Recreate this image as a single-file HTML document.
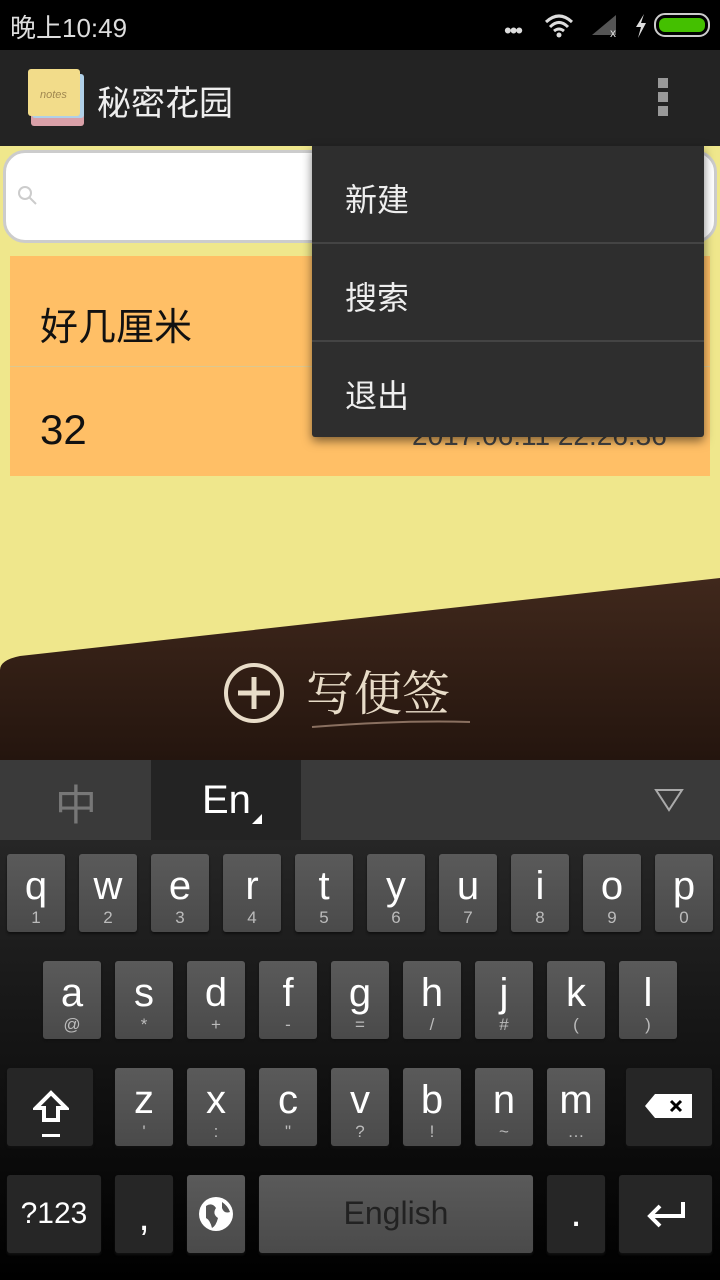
<!DOCTYPE html>
<html><head><meta charset="utf-8"><style>
*{margin:0;padding:0;box-sizing:border-box}
body{width:720px;height:1280px;overflow:hidden;position:relative;background:#EFE78C;font-family:"Liberation Sans","Noto Sans CJK SC",sans-serif}
.abs{position:absolute}
.key{position:absolute;width:58px;height:78px;background:linear-gradient(#5a5a5a,#4a4a4a);border-radius:3px;color:#fff;text-align:center;box-shadow:0 2px 2px #111}
.key .l{font-size:40px;line-height:1;position:absolute;top:12px;left:0;right:0}
.key .s{font-size:17px;color:#bbb;position:absolute;top:54px;left:0;right:0}
.dk{background:#262626}
</style></head><body>
<div class="abs" style="left:0;top:0;width:720px;height:50px;background:#000"></div>
<div class="abs" style="left:10px;top:8px;color:#ddd;font-size:26px">晚上10:49</div>
<div class="abs" style="left:504px;top:18px;color:#ddd;font-size:22px;letter-spacing:-2px">•••</div>
<svg class="abs" style="left:540px;top:10px" width="172" height="30"><path d="M6 12 Q19 0 32 12" stroke="#ddd" stroke-width="3" fill="none"/><path d="M10 17 Q19 8 28 17" stroke="#ddd" stroke-width="3" fill="none"/><path d="M14 21 Q19 17 24 21" stroke="#ddd" stroke-width="3" fill="none"/><circle cx="19" cy="25" r="2.5" fill="#ddd"/><path d="M52 25 L76 5 L76 25Z" fill="#555"/><text x="70" y="27" fill="#ddd" font-size="12">x</text><path d="M104 4 L96 17 L101 17 L98 28 L106 13 L101 13Z" fill="#ddd"/><rect x="115" y="4" width="54" height="22" rx="10" fill="none" stroke="#ccc" stroke-width="2"/><rect x="119" y="8" width="46" height="14" rx="6" fill="#44c000"/></svg>
<div class="abs" style="left:0;top:50px;width:720px;height:96px;background:#232323"></div>
<div class="abs" style="left:31px;top:98px;width:53px;height:28px;background:#d9a0a8;border-radius:3px"></div>
<div class="abs" style="left:32px;top:74px;width:52px;height:44px;background:#b0d0e8;border-radius:3px"></div>
<div class="abs" style="left:28px;top:69px;width:52px;height:47px;background:#f2dc8a;border-radius:3px;color:#a08850;font-size:11px;font-style:italic;padding:20px 0 0 12px">notes</div>
<div class="abs" style="left:97px;top:76px;color:#eee;font-size:34px">秘密花园</div>
<div class="abs" style="left:658px;top:78px;width:10px;height:10px;background:#999;box-shadow:0 14px #999,0 28px #999"></div>
<div class="abs" style="left:3px;top:150px;width:714px;height:93px;background:#fff;border-radius:22px;border:3px solid #ccc"></div>
<svg class="abs" style="left:16px;top:184px" width="24" height="24"><circle cx="9" cy="9" r="6" fill="none" stroke="#ccc" stroke-width="2"/><path d="M13 13 L20 20" stroke="#ccc" stroke-width="2"/></svg>
<div class="abs" style="left:10px;top:256px;width:700px;height:220px;background:#FFBF66"></div>
<div class="abs" style="left:10px;top:366px;width:700px;height:1px;background:#dcc890"></div>
<div class="abs" style="left:40px;top:296px;font-size:38px;color:#111">好几厘米</div>
<div class="abs" style="left:40px;top:406px;font-size:42px;color:#111">32</div>
<div class="abs" style="left:412px;top:420px;font-size:28px;color:#444">2017.06.11 22:26:36</div>
<div class="abs" style="left:312px;top:146px;width:392px;height:291px;background:#2e2e2e;box-shadow:0 4px 10px rgba(0,0,0,.5);border-radius:0 0 3px 3px"></div>
<div class="abs" style="left:312px;top:242px;width:392px;height:2px;background:#444"></div>
<div class="abs" style="left:312px;top:340px;width:392px;height:2px;background:#444"></div>
<div class="abs" style="left:345px;top:175px;color:#eee;font-size:32px">新建</div>
<div class="abs" style="left:345px;top:273px;color:#eee;font-size:32px">搜索</div>
<div class="abs" style="left:345px;top:371px;color:#eee;font-size:32px">退出</div>
<svg class="abs" style="left:0;top:570px" width="720" height="190"><defs><linearGradient id="lg" x1="0" y1="0" x2="0" y2="1"><stop offset="0" stop-color="#40281c"/><stop offset="1" stop-color="#24150e"/></linearGradient></defs><path d="M0 100 Q0 90 20 86 L720 8 L720 190 L0 190Z" fill="url(#lg)"/><circle cx="254" cy="123" r="28" fill="none" stroke="#e8dcc8" stroke-width="4"/><path d="M254 107V139M238 123H270" stroke="#e8dcc8" stroke-width="5"/><text x="306" y="140" fill="#e8dcc8" font-size="48" font-family="Noto Serif CJK SC,serif">写便签</text><path d="M312 157 Q400 150 470 152" stroke="#8a7060" stroke-width="2" fill="none"/></svg>
<div class="abs" style="left:0;top:760px;width:720px;height:80px;background:#3a3a3a"></div>
<div class="abs" style="left:151px;top:760px;width:150px;height:80px;background:#232323"></div>
<div class="abs" style="left:55px;top:772px;color:#777;font-size:42px">中</div>
<div class="abs" style="left:202px;top:778px;color:#fff;font-size:40px">En</div>
<div class="abs" style="left:252px;top:814px;width:0;height:0;border-left:10px solid transparent;border-bottom:10px solid #fff"></div>
<svg class="abs" style="left:654px;top:788px" width="30" height="24"><path d="M2 2H28L15 22Z" fill="none" stroke="#aaa" stroke-width="2"/></svg>
<div class="abs" style="left:0;top:840px;width:720px;height:440px;background:linear-gradient(#262626,#000)"></div>
<div class="key" style="left:7px;top:854px"><div class="l">q</div><div class="s">1</div></div>
<div class="key" style="left:79px;top:854px"><div class="l">w</div><div class="s">2</div></div>
<div class="key" style="left:151px;top:854px"><div class="l">e</div><div class="s">3</div></div>
<div class="key" style="left:223px;top:854px"><div class="l">r</div><div class="s">4</div></div>
<div class="key" style="left:295px;top:854px"><div class="l">t</div><div class="s">5</div></div>
<div class="key" style="left:367px;top:854px"><div class="l">y</div><div class="s">6</div></div>
<div class="key" style="left:439px;top:854px"><div class="l">u</div><div class="s">7</div></div>
<div class="key" style="left:511px;top:854px"><div class="l">i</div><div class="s">8</div></div>
<div class="key" style="left:583px;top:854px"><div class="l">o</div><div class="s">9</div></div>
<div class="key" style="left:655px;top:854px"><div class="l">p</div><div class="s">0</div></div>
<div class="key" style="left:43px;top:961px"><div class="l">a</div><div class="s">@</div></div>
<div class="key" style="left:115px;top:961px"><div class="l">s</div><div class="s">*</div></div>
<div class="key" style="left:187px;top:961px"><div class="l">d</div><div class="s">+</div></div>
<div class="key" style="left:259px;top:961px"><div class="l">f</div><div class="s">-</div></div>
<div class="key" style="left:331px;top:961px"><div class="l">g</div><div class="s">=</div></div>
<div class="key" style="left:403px;top:961px"><div class="l">h</div><div class="s">/</div></div>
<div class="key" style="left:475px;top:961px"><div class="l">j</div><div class="s">#</div></div>
<div class="key" style="left:547px;top:961px"><div class="l">k</div><div class="s">(</div></div>
<div class="key" style="left:619px;top:961px"><div class="l">l</div><div class="s">)</div></div>
<div class="key dk" style="left:7px;top:1068px;width:86px"><svg style="position:absolute;left:26px;top:22px" width="36" height="50"><path d="M18 3 L33 18 H25 V30 H11 V18 H3Z" fill="none" stroke="#fff" stroke-width="4"/><rect x="9" y="44" width="18" height="3" fill="#fff"/></svg></div>
<div class="key" style="left:115px;top:1068px"><div class="l">z</div><div class="s">'</div></div>
<div class="key" style="left:187px;top:1068px"><div class="l">x</div><div class="s">:</div></div>
<div class="key" style="left:259px;top:1068px"><div class="l">c</div><div class="s">"</div></div>
<div class="key" style="left:331px;top:1068px"><div class="l">v</div><div class="s">?</div></div>
<div class="key" style="left:403px;top:1068px"><div class="l">b</div><div class="s">!</div></div>
<div class="key" style="left:475px;top:1068px"><div class="l">n</div><div class="s">~</div></div>
<div class="key" style="left:547px;top:1068px"><div class="l">m</div><div class="s">…</div></div>
<div class="key dk" style="left:626px;top:1068px;width:86px"><svg style="position:absolute;left:19px;top:25px" width="48" height="26"><path d="M0 13 L10 1 H47 V25 H10Z" fill="#fff"/><path d="M26 8 L36 18 M36 8 L26 18" stroke="#000" stroke-width="3"/></svg></div>
<div class="key dk" style="left:7px;top:1175px;width:94px"><div class="l" style="font-size:30px;top:24px">?123</div></div>
<div class="key dk" style="left:115px;top:1175px"><div class="l" style="top:22px">,</div></div>
<div class="key" style="left:187px;top:1175px"><svg style="position:absolute;left:11px;top:21px" width="36" height="36"><circle cx="18" cy="18" r="17" fill="#fff"/><path d="M8 10 Q14 6 18 12 Q14 18 20 22 Q18 30 14 32 Q12 24 8 22Z M24 6 Q30 10 32 16 Q26 18 24 12Z" fill="#555"/></svg></div>
<div class="key" style="left:259px;top:1175px;width:274px"><div class="l" style="font-size:32px;top:22px;color:#222">English</div></div>
<div class="key dk" style="left:547px;top:1175px"><div class="l" style="top:18px">.</div></div>
<div class="key dk" style="left:619px;top:1175px;width:93px"><svg style="position:absolute;left:27px;top:25px" width="40" height="30"><path d="M37 2 V16 H5 M14 6 L4 16 L14 26" fill="none" stroke="#fff" stroke-width="4"/></svg></div>
</body></html>
